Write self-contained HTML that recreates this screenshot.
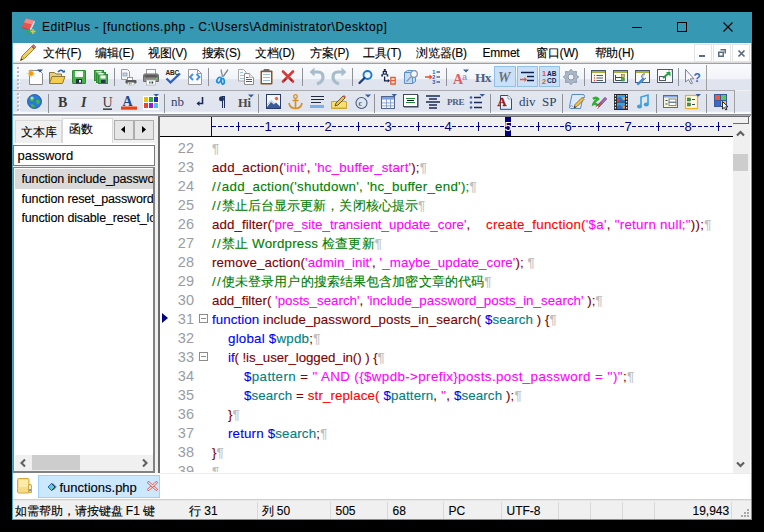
<!DOCTYPE html><html><head><meta charset="utf-8"><style>
*{margin:0;padding:0;box-sizing:border-box}
html,body{width:764px;height:532px;overflow:hidden;background:#000;font-family:"Liberation Sans",sans-serif;-webkit-text-stroke:0.12px}
.a{position:absolute;white-space:pre}
svg.a{overflow:visible}
.f12{font-size:12px;line-height:16px}
.f13{font-size:13.33px;line-height:19px}
.cj{font-size:13.33px}
.m{color:#ff00ff}.g{color:#008000}.b{color:#0000ff}.t{color:#008080}.r{color:#ff0000}.p{color:#c0c0c0}.k{color:#800000}
</style></head><body>
<div class="a" style="left:12px;top:12px;width:740px;height:508px;background:#45a6bf"></div>
<div class="a" style="left:13px;top:43px;width:738px;height:476px;background:#f0f0f0"></div>
<div class="a" style="left:12px;top:12px;width:740px;height:31px;background:#3798b3"></div>
<svg class="a" style="left:21px;top:18px" width="16" height="16" viewBox="0 0 16 16"><path d="M0.5 9.5L5 0.5L13 2.5L8.5 11.5Z" fill="#e8524a"/><path d="M5 0.5L13 2.5L11 6.5L3 4.5Z" fill="#f28a86"/><path d="M13 2.5L14 4L10 12.5L8.5 11.5Z" fill="#d4dcea"/><path d="M0.5 9.5L8.5 11.5L10 12.5L2 10.5Z" fill="#c03030"/><path d="M4.5 13.5H9.5M7 11V16" stroke="#2fb03a" stroke-width="1.5"/><path d="M9.5 13.5H14.5M12 11V16" stroke="#f0c41a" stroke-width="1.5"/></svg>
<div class="a " style="left:42px;top:19px;font-size:12px;line-height:16px;letter-spacing:0.575px;color:#000">EditPlus - [functions.php - C:\Users\Administrator\Desktop]</div>
<svg class="a" style="left:677px;top:22px" width="10" height="10" viewBox="0 0 10 10"><rect x="0.5" y="0.5" width="9" height="9" fill="none" stroke="#000" stroke-width="1"/></svg>
<div class="a" style="left:632px;top:27px;width:10px;height:1px;background:#000"></div>
<svg class="a" style="left:723px;top:22px" width="10" height="10" viewBox="0 0 10 10"><path d="M0.5 0.5L9.5 9.5M9.5 0.5L0.5 9.5" stroke="#000" stroke-width="1.1"/></svg>
<div class="a" style="left:13px;top:43px;width:738px;height:18px;background:#fff"></div>
<div class="a" style="left:13px;top:61px;width:738px;height:1px;background:#f0f0f0"></div>
<div class="a" style="left:13px;top:62px;width:738px;height:1px;background:#dadada"></div>
<div class="a" style="left:13px;top:63px;width:738px;height:1px;background:#a0a0a0"></div>
<svg class="a" style="left:19px;top:44px" width="18" height="18" viewBox="0 0 18 18"><path d="M1.5 16.5L3 12L13 2L15.5 4.5L5.5 14.5Z" fill="#f2cc5e" stroke="#8a6a2a" stroke-width="0.8"/><path d="M3 12L5.5 14.5" stroke="#c89a30" stroke-width="0.8"/><path d="M1.5 16.5L2.3 14.2L3.8 15.7Z" fill="#303030"/><path d="M13 2L14.5 0.5L17 3L15.5 4.5Z" fill="#e06a6a" stroke="#905050" stroke-width="0.6"/><path d="M12.5 2.5L15 5" stroke="#3a8a5a" stroke-width="1"/></svg>
<div class="a f12" style="left:43px;top:44.5px;color:#000;letter-spacing:-0.2px">文件(F)</div>
<div class="a f12" style="left:95px;top:44.5px;color:#000;letter-spacing:-0.2px">编辑(E)</div>
<div class="a f12" style="left:148px;top:44.5px;color:#000;letter-spacing:-0.2px">视图(V)</div>
<div class="a f12" style="left:201.5px;top:44.5px;color:#000;letter-spacing:-0.2px">搜索(S)</div>
<div class="a f12" style="left:255px;top:44.5px;color:#000;letter-spacing:-0.2px">文档(D)</div>
<div class="a f12" style="left:310px;top:44.5px;color:#000;letter-spacing:-0.2px">方案(P)</div>
<div class="a f12" style="left:363px;top:44.5px;color:#000;letter-spacing:-0.2px">工具(T)</div>
<div class="a f12" style="left:416px;top:44.5px;color:#000;letter-spacing:-0.2px">浏览器(B)</div>
<div class="a f12" style="left:482.5px;top:44.5px;color:#000;letter-spacing:-0.2px">Emmet</div>
<div class="a f12" style="left:536px;top:44.5px;color:#000;letter-spacing:-0.2px">窗口(W)</div>
<div class="a f12" style="left:594.5px;top:44.5px;color:#000;letter-spacing:-0.2px">帮助(H)</div>
<div class="a" style="left:694px;top:44px;width:18px;height:18px;border:1px solid #e3e3e3;background:#fff"></div>
<div class="a" style="left:713px;top:44px;width:18px;height:18px;border:1px solid #e3e3e3;background:#fff"></div>
<div class="a" style="left:732px;top:44px;width:18px;height:18px;border:1px solid #e3e3e3;background:#fff"></div>
<div class="a" style="left:699px;top:55px;width:6px;height:2px;background:#5b6b7b"></div>
<svg class="a" style="left:718px;top:49px" width="8" height="8" viewBox="0 0 8 8"><path d="M2.5 0.75H7.25V4.5M0.75 3.25H5.25V7.25H0.75Z" fill="none" stroke="#5b6b7b" stroke-width="1.5"/></svg>
<svg class="a" style="left:738px;top:50px" width="7" height="7" viewBox="0 0 7 7"><path d="M0.5 0.5L6.5 6.5M6.5 0.5L0.5 6.5" stroke="#5b6b7b" stroke-width="1.7"/></svg>
<div class="a" style="left:13px;top:64px;width:738px;height:26px;background:linear-gradient(#fafbfd 0px,#f1f4f8 15px,#dfe4ee 15.6px,#dfe4ee 26px)"></div>
<div class="a" style="left:13px;top:91px;width:738px;height:23px;background:linear-gradient(#e1e6ef 0px,#dfe4ee 20px,#eceff6 21px,#ffffff 22px)"></div>
<div class="a" style="left:706px;top:65px;width:1px;height:25px;background:#a0a0a0"></div>
<div class="a" style="left:13px;top:90px;width:722px;height:1px;background:#a9abb0"></div>
<div class="a" style="left:734px;top:90px;width:1px;height:23px;background:#a0a0a0"></div>
<div class="a" style="left:13px;top:114px;width:738px;height:1px;background:#8a8e98"></div>
<div class="a" style="left:13px;top:115px;width:738px;height:1px;background:#a6a6a6"></div>
<div class="a" style="left:494px;top:66px;width:21.5px;height:21px;background:#c9e0f7;border:1px solid #92c0ec"></div>
<div class="a" style="left:516.5px;top:66px;width:21.5px;height:21px;background:#c9e0f7;border:1px solid #92c0ec"></div>
<div class="a" style="left:538.5px;top:66px;width:21.5px;height:21px;background:#c9e0f7;border:1px solid #92c0ec"></div>
<svg class="a" style="left:27px;top:69px" width="16" height="16" viewBox="0 0 16 16"><path d="M2.5 1.5H12.5L15.5 4.5V15.5H2.5Z" fill="#fdfdfd" stroke="#8a8a8a"/><circle cx="4" cy="4.5" r="2.6" fill="#f6b21b"/><path d="M4 0V9M-0.5 4.5H8.5M1 1.5L7 7.5M7 1.5L1 7.5" stroke="#f9c46b" stroke-width="0.9" opacity="0.8"/><circle cx="4" cy="4.5" r="2" fill="#f39a0f"/><path d="M10 0.5H16L13 3.5Z" fill="#2d4f8e"/></svg>
<svg class="a" style="left:49px;top:69px" width="16" height="16" viewBox="0 0 16 16"><path d="M0.5 3.5H5.5L7 5H12.5V14.5H0.5Z" fill="#e9cf7c" stroke="#8c7a3e"/><path d="M3 7.5H16L13.5 14.5H0.5Z" fill="#f4cd4d" stroke="#8c7a3e"/><path d="M9 3Q12 -0.5 15 3" fill="none" stroke="#2f5f9f" stroke-width="1.4"/><path d="M13 3.5H16V1Z" fill="#2f5f9f"/></svg>
<svg class="a" style="left:72px;top:70px" width="16" height="16" viewBox="0 0 16 16"><rect x="0.5" y="0.5" width="13" height="13" rx="0.5" fill="#4ab04e" stroke="#2e8b36"/><rect x="3" y="1" width="8" height="6" fill="#f6fbf6"/><rect x="4" y="9" width="6" height="4.5" fill="#243040"/><rect x="7" y="10" width="2" height="2.5" fill="#e8e8f0"/></svg>
<svg class="a" style="left:94px;top:70px" width="16" height="16" viewBox="0 0 16 16"><rect x="0.5" y="0.5" width="9" height="10" fill="#4ab04e" stroke="#2e8b36"/><rect x="2.5" y="2.5" width="9" height="10" fill="#4ab04e" stroke="#2e8b36"/><rect x="4.5" y="4.5" width="9" height="9" fill="#4ab04e" stroke="#2e8b36"/><rect x="2.5" y="1" width="5" height="1.5" fill="#fff"/><rect x="4.5" y="3" width="5" height="1.5" fill="#fff"/><rect x="6.5" y="5.5" width="5" height="3" fill="#fff"/><rect x="7" y="10" width="4.5" height="3" fill="#2a3550"/></svg>
<svg class="a" style="left:121px;top:69px" width="16" height="16" viewBox="0 0 16 16"><path d="M0.5 0.5H6.5L8.5 2.5V10.5H0.5Z" fill="#f6f6f6" stroke="#9a9a9a"/><rect x="2" y="4" width="4" height="3" fill="#c4d4e8" stroke="#7a8aa0" stroke-width="0.6"/><rect x="6.5" y="8.5" width="5" height="3" fill="#fff" stroke="#999"/><rect x="4.5" y="11" width="11" height="3.5" rx="1" fill="#5a5a5a"/><rect x="7" y="13.5" width="6" height="2.5" fill="#fff" stroke="#aaa" stroke-width="0.5"/><rect x="8" y="14" width="1" height="1.5" fill="#3aa0e0"/><rect x="9.5" y="14" width="1" height="1.5" fill="#40b040"/></svg>
<svg class="a" style="left:143px;top:69px" width="16" height="16" viewBox="0 0 16 16"><rect x="3.5" y="0.5" width="9" height="5" fill="#fafafa" stroke="#9a9a9a"/><path d="M0.5 6.5Q0.5 5 2 5H14Q15.5 5 15.5 6.5V12.5H0.5Z" fill="#8c8c8c" stroke="#6a6a6a"/><rect x="1.5" y="6" width="13" height="2.5" fill="#5a5a5a"/><circle cx="13.5" cy="9.5" r="0.7" fill="#7ed07e"/><rect x="3.5" y="11" width="9" height="5" fill="#fff" stroke="#aaa" stroke-width="0.7"/><rect x="6" y="12.5" width="1.2" height="2" fill="#2a80d0"/><rect x="7.5" y="12.5" width="1.2" height="2" fill="#30a030"/><rect x="9" y="12.5" width="1.2" height="2" fill="#203060"/></svg>
<svg class="a" style="left:165px;top:69px" width="16" height="16" viewBox="0 0 16 16"><text x="0.5" y="5.8" font-family="Liberation Sans" font-size="6.5" font-weight="bold" fill="#222" letter-spacing="-0.2">ABC</text><path d="M1.5 9.5L5.5 13.5L15 4.5" fill="none" stroke="#2a5fc8" stroke-width="2.3"/></svg>
<svg class="a" style="left:187px;top:69px" width="16" height="16" viewBox="0 0 16 16"><path d="M1.5 0.5H10.5L14.5 4.5V15.5H1.5Z" fill="#fbfbfb" stroke="#9a9a9a"/><path d="M10.5 0.5V4.5H14.5" fill="none" stroke="#9a9a9a"/><path d="M6 5L3 8L6 11M9.5 5L12.5 8L9.5 11" fill="none" stroke="#3c8ee8" stroke-width="1.8"/></svg>
<svg class="a" style="left:214px;top:69px" width="16" height="16" viewBox="0 0 16 16"><path d="M7 0.5L8.5 8" stroke="#8a9098" stroke-width="1.4"/><path d="M14 0.5L9 8" stroke="#9aa0a8" stroke-width="1.4"/><path d="M13.5 1.5L9.5 7" stroke="#505860" stroke-width="0.5"/><ellipse cx="5" cy="11" rx="1.8" ry="3" fill="none" stroke="#1a8ee0" stroke-width="1.7" transform="rotate(30 5 11)"/><ellipse cx="8.8" cy="12.3" rx="1.5" ry="2.8" fill="none" stroke="#1a8ee0" stroke-width="1.7" transform="rotate(-5 8.8 12.3)"/></svg>
<svg class="a" style="left:238px;top:69px" width="16" height="16" viewBox="0 0 16 16"><path d="M0.5 0.5H5.5L8 3V12H0.5Z" fill="#fafafa" stroke="#a8a8a8"/><path d="M2 3.5H5M2 6.5H6.5M2 9.5H6" stroke="#8ab4e0" stroke-width="0.8"/><path d="M6.5 4.5H11.5L15.5 8.5V15.5H6.5Z" fill="#fdfdfd" stroke="#909090"/><path d="M11.5 4.5V8.5H15.5" fill="#e8e8e8" stroke="#909090" stroke-width="0.6"/><path d="M8 8.5H10.5M8 10.5H14M8 12.5H14" stroke="#2f64b8" stroke-width="1"/></svg>
<svg class="a" style="left:259px;top:69px" width="16" height="16" viewBox="0 0 16 16"><rect x="1.5" y="1.5" width="12" height="14" rx="1" fill="#8a5420"/><rect x="3" y="3.2" width="9" height="10.8" fill="#fbfcfe"/><rect x="4.5" y="0" width="6" height="2.8" rx="1" fill="#6a6a6a"/><path d="M4 5.5H11M4 8.5H11M4 11.5H11" stroke="#9cbce0" stroke-width="1"/></svg>
<svg class="a" style="left:281px;top:69px" width="16" height="16" viewBox="0 0 16 16"><path d="M2 2.5L12 12.5M12 2.5L2 12.5" stroke="#d63a3a" stroke-width="2.6" stroke-linecap="round"/><path d="M3 12L5 10M9 10L11 12" stroke="#8a2020" stroke-width="1.2"/></svg>
<svg class="a" style="left:309px;top:69px" width="16" height="16" viewBox="0 0 16 16"><path d="M4 3H9Q14 3 14 8Q14 13 8 15" fill="none" stroke="#a8bccc" stroke-width="3.2"/><path d="M0.5 3L5.5 -1.5V7.5Z" fill="#a8bccc"/></svg>
<svg class="a" style="left:331px;top:69px" width="16" height="16" viewBox="0 0 16 16"><path d="M12 3H7Q2 3 2 8Q2 13 8 15" fill="none" stroke="#a8bccc" stroke-width="3.2"/><path d="M15.5 3L10.5 -1.5V7.5Z" fill="#a8bccc"/></svg>
<svg class="a" style="left:358px;top:69px" width="16" height="16" viewBox="0 0 16 16"><circle cx="9.5" cy="6" r="4" fill="#eef6ff" stroke="#1f78d0" stroke-width="1.9"/><path d="M6.5 9L1.5 14" stroke="#1c3f78" stroke-width="2.3" stroke-linecap="round"/></svg>
<svg class="a" style="left:381px;top:69px" width="16" height="16" viewBox="0 0 16 16"><rect x="2.8" y="0" width="2" height="1.8" fill="#10204a"/><rect x="2.3" y="2.5" width="3" height="2.6" fill="none" stroke="#10204a" stroke-width="1.2"/><rect x="0.3" y="5.3" width="1.6" height="2.2" fill="#10204a"/><rect x="5.7" y="5.3" width="1.6" height="2.2" fill="#10204a"/><path d="M3.6 7.5V11.8H7" fill="none" stroke="#10204a" stroke-width="1.3"/><path d="M6.8 10L9 11.8L6.8 13.6Z" fill="#10204a"/><path d="M9.8 8.5H14.2V15H9.8Z M9.8 11.7H14.2" fill="none" stroke="#f05a2a" stroke-width="1.3"/></svg>
<svg class="a" style="left:403px;top:69px" width="16" height="16" viewBox="0 0 16 16"><path d="M1.5 3.5L4.5 1.5H12.5V12.5L9.5 14.5H1.5Z" fill="#c4dcf4" stroke="#5a90c8"/><path d="M1.5 3.5H9.5V14.5M9.5 3.5L12.5 1.5" fill="none" stroke="#5a90c8"/><circle cx="11" cy="5" r="3.3" fill="#f4f8fc" stroke="#8a9aaa" stroke-width="1.3"/><path d="M8.5 7.5L3.5 12.5" stroke="#8a9aaa" stroke-width="1.5"/></svg>
<svg class="a" style="left:425px;top:69px" width="16" height="16" viewBox="0 0 16 16"><path d="M0 8H5" stroke="#f04a20" stroke-width="1.5"/><path d="M4.5 5.5L7.5 8L4.5 10.5Z" fill="#f04a20"/><text x="7.2" y="5.2" font-family="Liberation Sans" font-size="5.5" font-weight="bold" fill="#1a5cc0">1</text><text x="7.2" y="10.2" font-family="Liberation Sans" font-size="5.5" font-weight="bold" fill="#1a5cc0">2</text><text x="7.2" y="15.2" font-family="Liberation Sans" font-size="5.5" font-weight="bold" fill="#1a5cc0">3</text><path d="M11.5 3H15M11.5 8H15M11.5 13H15" stroke="#10204a" stroke-width="1.2"/></svg>
<svg class="a" style="left:453px;top:69px" width="16" height="16" viewBox="0 0 16 16"><text x="0" y="15" font-family="Liberation Serif" font-size="14" font-weight="bold" fill="#dc6060">A</text><text x="9" y="11" font-family="Liberation Sans" font-size="9" font-weight="bold" fill="#a090d8">a</text><path d="M10 0.5H16L13 3.5Z" fill="#3a5aa0"/></svg>
<svg class="a" style="left:475px;top:69px" width="16" height="16" viewBox="0 0 16 16"><text x="0" y="13" font-family="Liberation Serif" font-size="13.5" font-weight="bold" fill="#4e5f80" letter-spacing="-0.8">Hx</text></svg>
<svg class="a" style="left:497px;top:69px" width="16" height="16" viewBox="0 0 16 16"><text x="1" y="13" font-family="Liberation Serif" font-size="14" font-style="italic" font-weight="bold" fill="#6b7080">W</text></svg>
<svg class="a" style="left:519px;top:69px" width="16" height="16" viewBox="0 0 16 16"><path d="M2 3.5H15M8 7.5H15M8 11.5H15" stroke="#102048" stroke-width="1.4"/><path d="M1 10.5H6" stroke="#f05020" stroke-width="1.5"/><path d="M5.5 8L8 10.5L5.5 13Z" fill="#f05020"/></svg>
<svg class="a" style="left:542px;top:69px" width="16" height="16" viewBox="0 0 16 16"><text x="0" y="7" font-family="Liberation Sans" font-size="7.5" font-weight="bold" fill="#f05020">1</text><text x="0" y="14.5" font-family="Liberation Sans" font-size="7.5" font-weight="bold" fill="#f05020">2</text><text x="5" y="6.8" font-family="Liberation Sans" font-size="6.5" font-weight="bold" fill="#10204a">AB</text><text x="5" y="14.3" font-family="Liberation Sans" font-size="6.5" font-weight="bold" fill="#10204a">CD</text></svg>
<svg class="a" style="left:563px;top:69px" width="16" height="16" viewBox="0 0 16 16"><polygon points="15.80,8.00 13.17,10.14 13.52,13.52 10.14,13.17 8.00,15.80 5.86,13.17 2.48,13.52 2.83,10.14 0.20,8.00 2.83,5.86 2.48,2.48 5.86,2.83 8.00,0.20 10.14,2.83 13.52,2.48 13.17,5.86" fill="#aab8c8" stroke="#8090a4" stroke-width="0.8" stroke-linejoin="round"/><circle cx="8" cy="8" r="3" fill="#eef2f6" stroke="#8a98aa"/></svg>
<svg class="a" style="left:591px;top:69px" width="16" height="16" viewBox="0 0 16 16"><rect x="0.5" y="1.5" width="14" height="12" fill="#fafaf4" stroke="#485870"/><rect x="1" y="2" width="13" height="2" fill="#a8b040"/><path d="M5.5 6.5H12M5.5 9H12M5.5 11.5H12" stroke="#505a6a" stroke-width="1"/><circle cx="3.5" cy="6.5" r="0.7" fill="#e84020"/><circle cx="3.5" cy="9" r="0.7" fill="#e84020"/><circle cx="3.5" cy="11.5" r="0.7" fill="#e84020"/></svg>
<svg class="a" style="left:613px;top:69px" width="16" height="16" viewBox="0 0 16 16"><rect x="0.5" y="1.5" width="14" height="12" fill="#fafaf4" stroke="#485870"/><rect x="1" y="2" width="13" height="2" fill="#a8b040"/><path d="M2.5 6V11.5H9M2.5 8.5H9" fill="none" stroke="#404a5a"/><rect x="8.5" y="5.5" width="3" height="3" fill="#f4c020" stroke="#505a6a" stroke-width="0.5"/><rect x="8.5" y="9" width="3" height="3" fill="#30c030" stroke="#505a6a" stroke-width="0.5"/></svg>
<svg class="a" style="left:635px;top:69px" width="16" height="16" viewBox="0 0 16 16"><rect x="0.5" y="1.5" width="14" height="12" fill="#fafaf4" stroke="#485870"/><rect x="1" y="2" width="13" height="2" fill="#a8b040"/><path d="M10 5A2.5 2.5 0 1 0 11 9L6 14" fill="#c8ccd4" stroke="#7a808a"/><path d="M8 10L3 15" stroke="#3a8ae0" stroke-width="2.4" stroke-linecap="round"/></svg>
<svg class="a" style="left:657px;top:69px" width="16" height="16" viewBox="0 0 16 16"><rect x="0.5" y="0.5" width="15" height="13" fill="#fafafa" stroke="#505a6a"/><path d="M11 2H11.5M12.5 2H13M14 2H14.5" stroke="#505a6a"/><rect x="2.5" y="7.5" width="6" height="4" fill="none" stroke="#505a6a"/><path d="M6 9L12 4" stroke="#20a040" stroke-width="2"/><path d="M9 3H13.5V7.5Z" fill="#20a040"/></svg>
<svg class="a" style="left:685px;top:69px" width="16" height="16" viewBox="0 0 16 16"><path d="M0.5 0.5V13L3.5 10.5L6 15L7.5 14.2L5.3 9.8H9Z" fill="#f4f6fa" stroke="#707884" stroke-width="0.9"/><text x="8.5" y="13" font-family="Liberation Sans" font-size="12" font-weight="bold" fill="#3070d0">?</text></svg>
<svg class="a" style="left:27px;top:94px" width="16" height="16" viewBox="0 0 16 16"><circle cx="7.5" cy="7.5" r="7" fill="#2a78d8" stroke="#1a4a98" stroke-width="0.8"/><path d="M3 4Q5 2 7 3Q8 5 6 7Q4 8 3 6Z M9 6Q12 5 13 8Q12 11 10 10Q9 8 9 6Z M4 10Q7 10 8 13Q6 14 4 12Z" fill="#40b848"/><circle cx="5" cy="4" r="1.5" fill="#cfe8ff" opacity="0.7"/></svg>
<svg class="a" style="left:58px;top:94px" width="16" height="16" viewBox="0 0 16 16"><text x="0" y="13" font-family="Liberation Serif" font-size="14" font-weight="bold" fill="#3a3a3a">B</text></svg>
<svg class="a" style="left:81px;top:94px" width="16" height="16" viewBox="0 0 16 16"><text x="0" y="13" font-family="Liberation Serif" font-size="14" font-weight="bold" font-style="italic" fill="#3a3a3a">I</text></svg>
<svg class="a" style="left:103px;top:94px" width="16" height="16" viewBox="0 0 16 16"><text x="-0.5" y="13" font-family="Liberation Serif" font-size="14" fill="#404040">U</text><rect x="0" y="14.5" width="9" height="1.3" fill="#202020"/></svg>
<svg class="a" style="left:121px;top:94px" width="16" height="16" viewBox="0 0 16 16"><text x="1.5" y="11.5" font-family="Liberation Serif" font-size="14" font-weight="bold" fill="#24468a">A</text><rect x="0" y="12.5" width="16" height="3.2" fill="#f04010"/></svg>
<svg class="a" style="left:143px;top:94px" width="16" height="16" viewBox="0 0 16 16"><rect x="0" y="2" width="16" height="14" fill="#fff"/><rect x="1" y="3" width="4" height="5" fill="#f7c400"/><rect x="6" y="3" width="4" height="5" fill="#34b034"/><rect x="11" y="3" width="4" height="5" fill="#2428d8"/><rect x="1" y="9" width="4" height="5" fill="#f04030"/><rect x="6" y="9" width="4" height="5" fill="#a018d8"/><rect x="11" y="9" width="4" height="5" fill="#40c8f0"/><path d="M10.5 0H16L13.2 2.8Z" fill="#3a5aa0"/></svg>
<svg class="a" style="left:171px;top:94px" width="16" height="16" viewBox="0 0 16 16"><text x="0" y="12" font-family="Liberation Serif" font-size="13" fill="#2a3f6a">nb</text></svg>
<svg class="a" style="left:196px;top:94px" width="16" height="16" viewBox="0 0 16 16"><path d="M6.5 3V9.5H1.5" fill="none" stroke="#1a2a5a" stroke-width="1.6"/><path d="M3.5 7L0.5 9.5L3.5 12Z" fill="#1a2a5a"/></svg>
<svg class="a" style="left:219px;top:94px" width="16" height="16" viewBox="0 0 16 16"><path d="M3 2H6V14H5V3H4V14H3Z" fill="#203060"/><circle cx="2.5" cy="4.8" r="2.5" fill="#203060"/></svg>
<svg class="a" style="left:238px;top:94px" width="16" height="16" viewBox="0 0 16 16"><text x="0" y="13" font-family="Liberation Serif" font-size="12.5" font-weight="bold" fill="#4a4a4a" letter-spacing="-0.3">Hi</text><path d="M10 0.5H16L13 3.5Z" fill="#3a5aa0"/></svg>
<svg class="a" style="left:266px;top:94px" width="16" height="16" viewBox="0 0 16 16"><rect x="0.5" y="0.5" width="14" height="14" fill="#f4f8fc" stroke="#2a3a6a"/><path d="M1 13L5 8L8 10.5L10 8.5L14 12.5V14H1Z" fill="#3a5a9a"/><path d="M1 11L5 6.5L9 10" fill="none" stroke="#8ab0e0" stroke-width="0.8"/><circle cx="10.5" cy="4.5" r="2" fill="#f06020" stroke="#fff" stroke-width="0.6"/></svg>
<svg class="a" style="left:288px;top:94px" width="16" height="16" viewBox="0 0 16 16"><circle cx="7.5" cy="2.5" r="1.8" fill="none" stroke="#d8902a" stroke-width="1.3"/><path d="M7.5 4V14.5M4.5 6.5H10.5" stroke="#d8902a" stroke-width="1.7"/><path d="M1 9Q2 14.5 7.5 14.5Q13 14.5 14 9" fill="none" stroke="#d8902a" stroke-width="1.7"/></svg>
<svg class="a" style="left:310px;top:94px" width="16" height="16" viewBox="0 0 16 16"><path d="M1 2.5H14M1 5.5H14M1 8.5H11" stroke="#202a3a" stroke-width="1.2"/><rect x="0" y="11" width="14" height="3" fill="#7ab0e8"/></svg>
<svg class="a" style="left:331px;top:94px" width="16" height="16" viewBox="0 0 16 16"><path d="M0.5 7.5H15.5V14.5H0.5Z" fill="#f8e070" stroke="#c8a830"/><path d="M1 13.5H15" stroke="#e8c84a"/><path d="M4 12L5 9L12 2L14 4L7 11Z" fill="#f0c040" stroke="#504020" stroke-width="0.8"/><path d="M12 2L13 1L15 3L14 4Z" fill="#e05050"/></svg>
<svg class="a" style="left:355px;top:94px" width="16" height="16" viewBox="0 0 16 16"><circle cx="6.5" cy="9" r="5.5" fill="none" stroke="#455a80" stroke-width="1.1"/><text x="3.6" y="12" font-family="Liberation Serif" font-size="8" font-weight="bold" fill="#455a80">c</text><path d="M10 0.5H16L13 3.5Z" fill="#3a5aa0"/></svg>
<svg class="a" style="left:381px;top:94px" width="16" height="16" viewBox="0 0 16 16"><rect x="0.5" y="2.5" width="13" height="12" fill="#f4f8ff" stroke="#50648a"/><rect x="1" y="3" width="12" height="2.5" fill="#7aa0e8"/><rect x="5" y="5" width="0.8" height="9.5" fill="#7a94c8"/><rect x="9" y="5" width="0.8" height="9.5" fill="#7a94c8"/><rect x="1" y="8.5" width="12.5" height="0.8" fill="#7a94c8"/><rect x="1" y="11.5" width="12.5" height="0.8" fill="#7a94c8"/><path d="M10.5 0H16L13.2 2.8Z" fill="#3a5aa0"/></svg>
<svg class="a" style="left:403px;top:94px" width="16" height="16" viewBox="0 0 16 16"><rect x="0.5" y="0.5" width="14" height="12" fill="#fff" stroke="#404a5a"/><path d="M1 13.5H15.5V1" fill="none" stroke="#8a94a8"/><path d="M3 4.5H12M4 6.5H11M3 8.5H12" stroke="#208a30" stroke-width="1"/><path d="M4 6.5H11" stroke="#101820"/></svg>
<svg class="a" style="left:425px;top:94px" width="16" height="16" viewBox="0 0 16 16"><path d="M1 2H15M4 5H12M1 8H15M4 11H12M4 14H12" stroke="#1a2a5a" stroke-width="1.5"/></svg>
<svg class="a" style="left:447px;top:94px" width="16" height="16" viewBox="0 0 16 16"><text x="0" y="11" font-family="Liberation Serif" font-size="9" font-weight="bold" fill="#4a5c80" letter-spacing="-0.3">PRE</text></svg>
<svg class="a" style="left:469px;top:94px" width="16" height="16" viewBox="0 0 16 16"><circle cx="2" cy="3.5" r="1.3" fill="#3a62b0"/><circle cx="2" cy="8.5" r="1.3" fill="#3a62b0"/><circle cx="2" cy="13.5" r="1.3" fill="#3a62b0"/><path d="M5 3.5H12M5 8.5H13M5 13.5H13" stroke="#1a2a5a" stroke-width="1.3"/><path d="M10.5 0H16L13.2 2.8Z" fill="#3a5aa0"/></svg>
<svg class="a" style="left:497px;top:94px" width="16" height="16" viewBox="0 0 16 16"><path d="M3.5 1.5H11L14.5 5V15.5H3.5Z" fill="#eef4fb" stroke="#3a4a6a" stroke-width="1"/><path d="M11 1.5V5H14.5" fill="#fff" stroke="#7a8aa8" stroke-width="0.8"/><path d="M4 14.5H14" stroke="#b8d4ee" stroke-width="1.5"/><text x="0.5" y="11.5" font-family="Liberation Serif" font-size="12.5" font-weight="bold" fill="#a01414" stroke="#a01414" stroke-width="0.3">A</text></svg>
<svg class="a" style="left:519px;top:94px" width="16" height="16" viewBox="0 0 16 16"><text x="0" y="12" font-family="Liberation Serif" font-size="13" fill="#2a3f6a">div</text></svg>
<svg class="a" style="left:542px;top:94px" width="16" height="16" viewBox="0 0 16 16"><text x="0" y="12" font-family="Liberation Serif" font-size="13" fill="#2a3f6a">SP</text></svg>
<svg class="a" style="left:569px;top:94px" width="16" height="16" viewBox="0 0 16 16"><path d="M3 0.5H14Q15.5 0.5 15.5 2.5V3.5H14L11.5 14.5H1.5Q0 14.5 0.5 12.5Z" fill="#dce9f8" stroke="#5a8ac8"/><path d="M1 12.5Q2.5 11 4 12.5" fill="none" stroke="#5a8ac8" stroke-width="0.8"/><path d="M5 14L6 10.5L13 3.5L15 5.5L8 12.5Z" fill="#f4c040" stroke="#705020" stroke-width="0.7"/><path d="M5 14L5.6 11.8L7 13.2Z" fill="#402010"/></svg>
<svg class="a" style="left:591px;top:94px" width="16" height="16" viewBox="0 0 16 16"><path d="M2 5Q5 2.5 7 5Q3 8 2.5 10Q5 9 7.5 12" fill="none" stroke="#30b030" stroke-width="2.6"/><path d="M5.5 14L15 4" stroke="#5a4a7a" stroke-width="3"/><path d="M6 13.5L15 4" stroke="#e04a4a" stroke-width="1.8"/><path d="M11 8.5L15 4" stroke="#8a70d8" stroke-width="1.8"/><path d="M5 14.5L7 12.5" stroke="#f0f0f0" stroke-width="1.8"/></svg>
<svg class="a" style="left:614px;top:94px" width="16" height="16" viewBox="0 0 16 16"><rect x="0" y="0" width="14" height="16" fill="#2a2a2a"/><rect x="3" y="1" width="8" height="6.5" fill="#3a9ee6"/><rect x="3" y="8.5" width="8" height="6.5" fill="#3a9ee6"/><path d="M3 4L6 3L8 5L11 4V7.5H3Z" fill="#2a70c8"/><rect x="8.5" y="3" width="2.5" height="3" fill="#f0a030"/><rect x="3" y="5" width="2" height="2.5" fill="#e84030"/><path d="M3 12L6 11L8 12.5L11 11.5V15H3Z" fill="#2a70c8"/><rect x="8.5" y="12" width="2.5" height="2.5" fill="#f08030"/><rect x="0.8" y="1" width="1.2" height="1.5" fill="#eee"/><rect x="12" y="1" width="1.2" height="1.5" fill="#eee"/><rect x="0.8" y="4" width="1.2" height="1.5" fill="#eee"/><rect x="12" y="4" width="1.2" height="1.5" fill="#eee"/><rect x="0.8" y="7" width="1.2" height="1.5" fill="#eee"/><rect x="12" y="7" width="1.2" height="1.5" fill="#eee"/><rect x="0.8" y="10" width="1.2" height="1.5" fill="#eee"/><rect x="12" y="10" width="1.2" height="1.5" fill="#eee"/><rect x="0.8" y="13" width="1.2" height="1.5" fill="#eee"/><rect x="12" y="13" width="1.2" height="1.5" fill="#eee"/></svg>
<svg class="a" style="left:637px;top:94px" width="16" height="16" viewBox="0 0 16 16"><path d="M4 12V3L11 1V10" fill="none" stroke="#3aa0e0" stroke-width="1.6"/><ellipse cx="2.5" cy="12.5" rx="2.5" ry="2" fill="#3aa0e0"/><ellipse cx="9.3" cy="10.5" rx="2.5" ry="2" fill="#3aa0e0"/></svg>
<svg class="a" style="left:663px;top:94px" width="16" height="16" viewBox="0 0 16 16"><rect x="0.5" y="1.5" width="14" height="12" fill="#f8f4d8" stroke="#5a6a8a"/><rect x="1" y="2" width="13" height="1.5" fill="#88a8e0"/><path d="M2.5 6.5H4.5M2.5 10H4.5" stroke="#404a5a"/><rect x="6" y="5" width="7" height="3" fill="#fff" stroke="#5a6a8a" stroke-width="0.8"/><rect x="6" y="8.5" width="7" height="3" fill="#fff" stroke="#5a6a8a" stroke-width="0.8"/></svg>
<svg class="a" style="left:685px;top:94px" width="16" height="16" viewBox="0 0 16 16"><rect x="0.5" y="1.5" width="12" height="13" fill="#fffbe0" stroke="#f0b020" stroke-width="1.2"/><rect x="2.5" y="4" width="3" height="3" fill="#30a040" stroke="#305040" stroke-width="0.5"/><rect x="2.5" y="9" width="3" height="3" fill="#30a040" stroke="#305040" stroke-width="0.5"/><path d="M7 5.5H10M7 10.5H10" stroke="#404a5a"/><path d="M10.5 0H16L13.2 2.8Z" fill="#3a5aa0"/></svg>
<svg class="a" style="left:714px;top:94px" width="16" height="16" viewBox="0 0 16 16"><rect x="0" y="0" width="13" height="13" fill="#3a5aa0"/><rect x="1" y="1" width="5" height="5" fill="#f05a3a"/><rect x="7" y="1" width="5" height="5" fill="#5ac85a"/><rect x="1" y="7" width="5" height="5" fill="#3a6ac8"/><rect x="7" y="7" width="5" height="5" fill="#f8c020"/><path d="M8.5 7.5V15L10.3 13.4L11.8 16L13 15.4L11.7 12.8H14Z" fill="#fff" stroke="#000" stroke-width="0.8"/></svg>
<div class="a" style="left:114px;top:68px;width:1px;height:18px;background:#8e9298"></div>
<div class="a" style="left:208px;top:68px;width:1px;height:18px;background:#8e9298"></div>
<div class="a" style="left:302px;top:68px;width:1px;height:18px;background:#8e9298"></div>
<div class="a" style="left:352px;top:68px;width:1px;height:18px;background:#8e9298"></div>
<div class="a" style="left:446px;top:68px;width:1px;height:18px;background:#8e9298"></div>
<div class="a" style="left:584px;top:68px;width:1px;height:18px;background:#8e9298"></div>
<div class="a" style="left:678px;top:68px;width:1px;height:18px;background:#8e9298"></div>
<div class="a" style="left:48px;top:94px;width:1px;height:19px;background:#8e9298"></div>
<div class="a" style="left:164px;top:94px;width:1px;height:19px;background:#8e9298"></div>
<div class="a" style="left:258px;top:94px;width:1px;height:19px;background:#8e9298"></div>
<div class="a" style="left:374px;top:94px;width:1px;height:19px;background:#8e9298"></div>
<div class="a" style="left:490px;top:94px;width:1px;height:19px;background:#8e9298"></div>
<div class="a" style="left:562px;top:94px;width:1px;height:19px;background:#8e9298"></div>
<div class="a" style="left:656px;top:94px;width:1px;height:19px;background:#8e9298"></div>
<div class="a" style="left:706px;top:94px;width:1px;height:19px;background:#8e9298"></div>
<div class="a" style="left:17px;top:67px;width:2px;height:2px;background:#b4bcc8;box-shadow:1px 1px 0 #fff"></div>
<div class="a" style="left:17px;top:71px;width:2px;height:2px;background:#b4bcc8;box-shadow:1px 1px 0 #fff"></div>
<div class="a" style="left:17px;top:75px;width:2px;height:2px;background:#b4bcc8;box-shadow:1px 1px 0 #fff"></div>
<div class="a" style="left:17px;top:79px;width:2px;height:2px;background:#b4bcc8;box-shadow:1px 1px 0 #fff"></div>
<div class="a" style="left:17px;top:83px;width:2px;height:2px;background:#b4bcc8;box-shadow:1px 1px 0 #fff"></div>
<div class="a" style="left:17px;top:87px;width:2px;height:2px;background:#b4bcc8;box-shadow:1px 1px 0 #fff"></div>
<div class="a" style="left:17px;top:93px;width:2px;height:2px;background:#b4bcc8;box-shadow:1px 1px 0 #fff"></div>
<div class="a" style="left:17px;top:97px;width:2px;height:2px;background:#b4bcc8;box-shadow:1px 1px 0 #fff"></div>
<div class="a" style="left:17px;top:101px;width:2px;height:2px;background:#b4bcc8;box-shadow:1px 1px 0 #fff"></div>
<div class="a" style="left:17px;top:105px;width:2px;height:2px;background:#b4bcc8;box-shadow:1px 1px 0 #fff"></div>
<div class="a" style="left:17px;top:109px;width:2px;height:2px;background:#b4bcc8;box-shadow:1px 1px 0 #fff"></div>
<div class="a" style="left:13px;top:116px;width:146px;height:357px;background:#f0f0f0"></div>
<div class="a" style="left:13px;top:116px;width:145px;height:1px;background:#f8f8f8"></div>
<div class="a" style="left:15px;top:120px;width:47px;height:23px;background:#f0f0f0;border:1px solid #d9d9d9;border-bottom:none"></div>
<div class="a " style="left:21px;top:123.5px;color:#000;font-size:12px;line-height:16px">文本库</div>
<div class="a" style="left:62px;top:118px;width:51px;height:27px;background:#fff;border:1px solid #d9d9d9;border-bottom:none"></div>
<div class="a " style="left:69px;top:121px;color:#000;font-size:12px;line-height:16px">函数</div>
<div class="a" style="left:14px;top:143px;width:142px;height:2px;background:#fff"></div>
<div class="a" style="left:114px;top:120px;width:20px;height:20px;background:#e6e6e6;border:1px solid #adadad"></div>
<div class="a" style="left:134px;top:120px;width:20px;height:20px;background:#e6e6e6;border:1px solid #adadad"></div>
<svg class="a" style="left:121px;top:126px" width="4" height="7" viewBox="0 0 4 7"><path d="M4 0V7L0 3.5Z" fill="#000"/></svg>
<svg class="a" style="left:142px;top:126px" width="4" height="7" viewBox="0 0 4 7"><path d="M0 0V7L4 3.5Z" fill="#000"/></svg>
<div class="a" style="left:13px;top:145px;width:142px;height:21px;background:#fff;border:1px solid #7a7a7a"></div>
<div class="a " style="left:17.5px;top:148px;color:#000;font-size:13px;line-height:16px">password</div>
<div class="a" style="left:13px;top:167px;width:142px;height:306px;background:#fff;border:1px solid #828282;border-right:2px solid #828282;border-bottom:2px solid #828282"></div>
<div class="a" style="left:15px;top:169px;width:138px;height:20px;background:#d9d9d9"></div>
<div class="a" style="left:21.5px;top:171.0px;width:131px;overflow:hidden;font-size:12.5px;line-height:16px;letter-spacing:-0.15px;color:#000">function include_password_posts_in_search</div>
<div class="a" style="left:21.5px;top:190.5px;width:131px;overflow:hidden;font-size:12.5px;line-height:16px;letter-spacing:-0.15px;color:#000">function reset_password_</div>
<div class="a" style="left:21.5px;top:210.0px;width:131px;overflow:hidden;font-size:12.5px;line-height:16px;letter-spacing:-0.15px;color:#000">function disable_reset_lost</div>
<div class="a" style="left:15px;top:455px;width:138px;height:16px;background:#f0f0f0"></div>
<div class="a" style="left:32px;top:455px;width:48px;height:15px;background:#cdcdcd"></div>
<svg class="a" style="left:20px;top:459px" width="6" height="9" viewBox="0 0 6 9"><path d="M5 0.5L1.5 4L5 7.5" fill="none" stroke="#606060" stroke-width="2.1"/></svg>
<svg class="a" style="left:142px;top:459px" width="6" height="9" viewBox="0 0 6 9"><path d="M1 0.5L4.5 4L1 7.5" fill="none" stroke="#606060" stroke-width="2.1"/></svg>
<div class="a" style="left:155px;top:116px;width:3px;height:357px;background:#f0f0f0"></div>
<div class="a" style="left:158px;top:116px;width:593px;height:357px;background:#fff"></div>
<div class="a" style="left:158px;top:116px;width:2px;height:357px;background:#6c6c6c"></div>
<div class="a" style="left:158px;top:116px;width:593px;height:1px;background:#6c6c6c"></div>
<div class="a" style="left:160px;top:117px;width:573px;height:19px;background:#f0f0f0"></div>
<div class="a" style="left:160px;top:136px;width:573px;height:1px;background:#000"></div>
<div class="a" style="left:160px;top:117px;width:573px;height:19px;overflow:hidden">
<svg class="a" style="left:-160px;top:-117px" width="764" height="140"><rect x="211" y="117" width="1" height="19" fill="#000080"/><rect x="212" y="126" width="4" height="1" fill="#000080"/><rect x="218" y="126" width="4" height="1" fill="#000080"/><rect x="224" y="126" width="4" height="1" fill="#000080"/><rect x="230" y="126" width="4" height="1" fill="#000080"/><rect x="236" y="126" width="4" height="1" fill="#000080"/><rect x="238" y="122" width="1" height="9" fill="#000080"/><rect x="242" y="126" width="4" height="1" fill="#000080"/><rect x="248" y="126" width="4" height="1" fill="#000080"/><rect x="254" y="126" width="4" height="1" fill="#000080"/><rect x="260" y="126" width="4" height="1" fill="#000080"/><rect x="272" y="126" width="4" height="1" fill="#000080"/><rect x="278" y="126" width="4" height="1" fill="#000080"/><rect x="284" y="126" width="4" height="1" fill="#000080"/><rect x="290" y="126" width="4" height="1" fill="#000080"/><rect x="296" y="126" width="4" height="1" fill="#000080"/><rect x="298" y="122" width="1" height="9" fill="#000080"/><rect x="302" y="126" width="4" height="1" fill="#000080"/><rect x="308" y="126" width="4" height="1" fill="#000080"/><rect x="314" y="126" width="4" height="1" fill="#000080"/><rect x="320" y="126" width="4" height="1" fill="#000080"/><rect x="332" y="126" width="4" height="1" fill="#000080"/><rect x="338" y="126" width="4" height="1" fill="#000080"/><rect x="344" y="126" width="4" height="1" fill="#000080"/><rect x="350" y="126" width="4" height="1" fill="#000080"/><rect x="356" y="126" width="4" height="1" fill="#000080"/><rect x="358" y="122" width="1" height="9" fill="#000080"/><rect x="362" y="126" width="4" height="1" fill="#000080"/><rect x="368" y="126" width="4" height="1" fill="#000080"/><rect x="374" y="126" width="4" height="1" fill="#000080"/><rect x="380" y="126" width="4" height="1" fill="#000080"/><rect x="392" y="126" width="4" height="1" fill="#000080"/><rect x="398" y="126" width="4" height="1" fill="#000080"/><rect x="404" y="126" width="4" height="1" fill="#000080"/><rect x="410" y="126" width="4" height="1" fill="#000080"/><rect x="416" y="126" width="4" height="1" fill="#000080"/><rect x="418" y="122" width="1" height="9" fill="#000080"/><rect x="422" y="126" width="4" height="1" fill="#000080"/><rect x="428" y="126" width="4" height="1" fill="#000080"/><rect x="434" y="126" width="4" height="1" fill="#000080"/><rect x="440" y="126" width="4" height="1" fill="#000080"/><rect x="452" y="126" width="4" height="1" fill="#000080"/><rect x="458" y="126" width="4" height="1" fill="#000080"/><rect x="464" y="126" width="4" height="1" fill="#000080"/><rect x="470" y="126" width="4" height="1" fill="#000080"/><rect x="476" y="126" width="4" height="1" fill="#000080"/><rect x="478" y="122" width="1" height="9" fill="#000080"/><rect x="482" y="126" width="4" height="1" fill="#000080"/><rect x="488" y="126" width="4" height="1" fill="#000080"/><rect x="494" y="126" width="4" height="1" fill="#000080"/><rect x="500" y="126" width="4" height="1" fill="#000080"/><rect x="512" y="126" width="4" height="1" fill="#000080"/><rect x="518" y="126" width="4" height="1" fill="#000080"/><rect x="524" y="126" width="4" height="1" fill="#000080"/><rect x="530" y="126" width="4" height="1" fill="#000080"/><rect x="536" y="126" width="4" height="1" fill="#000080"/><rect x="538" y="122" width="1" height="9" fill="#000080"/><rect x="542" y="126" width="4" height="1" fill="#000080"/><rect x="548" y="126" width="4" height="1" fill="#000080"/><rect x="554" y="126" width="4" height="1" fill="#000080"/><rect x="560" y="126" width="4" height="1" fill="#000080"/><rect x="572" y="126" width="4" height="1" fill="#000080"/><rect x="578" y="126" width="4" height="1" fill="#000080"/><rect x="584" y="126" width="4" height="1" fill="#000080"/><rect x="590" y="126" width="4" height="1" fill="#000080"/><rect x="596" y="126" width="4" height="1" fill="#000080"/><rect x="598" y="122" width="1" height="9" fill="#000080"/><rect x="602" y="126" width="4" height="1" fill="#000080"/><rect x="608" y="126" width="4" height="1" fill="#000080"/><rect x="614" y="126" width="4" height="1" fill="#000080"/><rect x="620" y="126" width="4" height="1" fill="#000080"/><rect x="632" y="126" width="4" height="1" fill="#000080"/><rect x="638" y="126" width="4" height="1" fill="#000080"/><rect x="644" y="126" width="4" height="1" fill="#000080"/><rect x="650" y="126" width="4" height="1" fill="#000080"/><rect x="656" y="126" width="4" height="1" fill="#000080"/><rect x="658" y="122" width="1" height="9" fill="#000080"/><rect x="662" y="126" width="4" height="1" fill="#000080"/><rect x="668" y="126" width="4" height="1" fill="#000080"/><rect x="674" y="126" width="4" height="1" fill="#000080"/><rect x="680" y="126" width="4" height="1" fill="#000080"/><rect x="692" y="126" width="4" height="1" fill="#000080"/><rect x="698" y="126" width="4" height="1" fill="#000080"/><rect x="704" y="126" width="4" height="1" fill="#000080"/><rect x="710" y="126" width="4" height="1" fill="#000080"/><rect x="716" y="126" width="4" height="1" fill="#000080"/><rect x="718" y="122" width="1" height="9" fill="#000080"/><rect x="722" y="126" width="4" height="1" fill="#000080"/><rect x="728" y="126" width="4" height="1" fill="#000080"/><rect x="505" y="117" width="6" height="19" fill="#000080"/></svg>
<div class="a" style="left:103px;top:0px;width:10px;text-align:center;font-size:13px;line-height:19px;color:#000080;-webkit-text-stroke:0">1</div>
<div class="a" style="left:163px;top:0px;width:10px;text-align:center;font-size:13px;line-height:19px;color:#000080;-webkit-text-stroke:0">2</div>
<div class="a" style="left:223px;top:0px;width:10px;text-align:center;font-size:13px;line-height:19px;color:#000080;-webkit-text-stroke:0">3</div>
<div class="a" style="left:283px;top:0px;width:10px;text-align:center;font-size:13px;line-height:19px;color:#000080;-webkit-text-stroke:0">4</div>
<div class="a" style="left:343px;top:0px;width:10px;text-align:center;font-size:13px;line-height:19px;color:#fff;-webkit-text-stroke:0">5</div>
<div class="a" style="left:403px;top:0px;width:10px;text-align:center;font-size:13px;line-height:19px;color:#000080;-webkit-text-stroke:0">6</div>
<div class="a" style="left:463px;top:0px;width:10px;text-align:center;font-size:13px;line-height:19px;color:#000080;-webkit-text-stroke:0">7</div>
<div class="a" style="left:523px;top:0px;width:10px;text-align:center;font-size:13px;line-height:19px;color:#000080;-webkit-text-stroke:0">8</div>
</div>
<div class="a" style="left:733px;top:117px;width:17px;height:356px;background:#f0f0f0"></div>
<div class="a" style="left:733px;top:117px;width:16px;height:7px;background:#f0f0f0;border:1px solid #6c6c6c;border-top:none;border-left:none"></div>
<div class="a" style="left:733px;top:154px;width:15px;height:17px;background:#cdcdcd"></div>
<svg class="a" style="left:736px;top:130px" width="10" height="7" viewBox="0 0 10 7"><path d="M1 5.5L4.5 2L8 5.5" fill="none" stroke="#606060" stroke-width="2.2"/></svg>
<svg class="a" style="left:736px;top:461px" width="10" height="7" viewBox="0 0 10 7"><path d="M1 1.5L4.5 5L8 1.5" fill="none" stroke="#606060" stroke-width="2.2"/></svg>
<div class="a" style="left:750px;top:116px;width:1px;height:357px;background:#fff"></div>
<div class="a" style="left:160px;top:137px;width:573px;height:335px;overflow:hidden">
<div class="a" style="left:0px;top:2px;width:34px;text-align:right;color:#9a9ca4;font-size:14.5px;line-height:19px;-webkit-text-stroke:0">22</div>
<div class="a f13" style="left:52px;top:2px;letter-spacing:0.3px;color:#800000"><span class="p">¶</span></div>
<div class="a" style="left:0px;top:21px;width:34px;text-align:right;color:#9a9ca4;font-size:14.5px;line-height:19px;-webkit-text-stroke:0">23</div>
<div class="a f13" style="left:52px;top:21px;letter-spacing:0.174px;color:#800000"><span class="k">add_action(</span><span class="m">'init'</span><span class="k">, </span><span class="m">'hc_buffer_start'</span><span class="k">);</span><span class="p">¶</span></div>
<div class="a" style="left:0px;top:40px;width:34px;text-align:right;color:#9a9ca4;font-size:14.5px;line-height:19px;-webkit-text-stroke:0">24</div>
<div class="a f13" style="left:52px;top:40px;letter-spacing:0.259px;color:#800000"><span class="g"><span style="letter-spacing:1.2px">//</span>add_action('shutdown', 'hc_buffer_end');</span><span class="p">¶</span></div>
<div class="a" style="left:0px;top:59px;width:34px;text-align:right;color:#9a9ca4;font-size:14.5px;line-height:19px;-webkit-text-stroke:0">25</div>
<div class="a f13" style="left:52px;top:59px;letter-spacing:0.074px;color:#800000"><span class="g"><span style="letter-spacing:1.2px">//</span><span class="cj">禁止后台显示更新，关闭核心提示</span></span><span class="p">¶</span></div>
<div class="a" style="left:0px;top:78px;width:34px;text-align:right;color:#9a9ca4;font-size:14.5px;line-height:19px;-webkit-text-stroke:0">26</div>
<div class="a f13" style="left:326px;top:78px;letter-spacing:0.263px;color:#800000"><span class="r">create_function(</span><span class="m">'$a'</span><span class="k">, </span><span class="m">"return null;"</span><span class="k">));</span><span class="p">¶</span></div>
<div class="a" style="left:0px;top:97px;width:34px;text-align:right;color:#9a9ca4;font-size:14.5px;line-height:19px;-webkit-text-stroke:0">27</div>
<div class="a f13" style="left:52px;top:97px;letter-spacing:0.202px;color:#800000"><span class="g"><span style="letter-spacing:1.2px">//</span><span class="cj">禁止</span> Wordpress <span class="cj">检查更新</span></span><span class="p">¶</span></div>
<div class="a" style="left:0px;top:116px;width:34px;text-align:right;color:#9a9ca4;font-size:14.5px;line-height:19px;-webkit-text-stroke:0">28</div>
<div class="a f13" style="left:52px;top:116px;letter-spacing:0.088px;color:#800000"><span class="k">remove_action(</span><span class="m">'admin_init'</span><span class="k">, </span><span class="m">'_maybe_update_core'</span><span class="k">); </span><span class="p">¶</span></div>
<div class="a" style="left:0px;top:135px;width:34px;text-align:right;color:#9a9ca4;font-size:14.5px;line-height:19px;-webkit-text-stroke:0">29</div>
<div class="a f13" style="left:52px;top:135px;letter-spacing:0.118px;color:#800000"><span class="g"><span style="letter-spacing:1.2px">//</span><span class="cj">使未登录用户的搜索结果包含加密文章的代码</span></span><span class="p">¶</span></div>
<div class="a" style="left:0px;top:154px;width:34px;text-align:right;color:#9a9ca4;font-size:14.5px;line-height:19px;-webkit-text-stroke:0">30</div>
<div class="a f13" style="left:52px;top:154px;letter-spacing:0.009px;color:#800000"><span class="k">add_filter( </span><span class="m">'posts_search'</span><span class="k">, </span><span class="m">'include_password_posts_in_search'</span><span class="k"> );</span><span class="p">¶</span></div>
<div class="a" style="left:0px;top:173px;width:34px;text-align:right;color:#9a9ca4;font-size:14.5px;line-height:19px;-webkit-text-stroke:0">31</div>
<svg class="a" style="left:39px;top:177px" width="9" height="9"><rect x="0.5" y="0.5" width="8" height="8" fill="#fff" stroke="#8c8c8c"/><rect x="2" y="4" width="5" height="1" fill="#8c8c8c"/></svg>
<div class="a f13" style="left:52px;top:173px;letter-spacing:0.077px;color:#800000"><span class="b">function</span><span class="k"> include_password_posts_in_search( </span><span class="b">$</span><span class="t">search</span><span class="k"> ) {</span><span class="p">¶</span></div>
<div class="a" style="left:0px;top:192px;width:34px;text-align:right;color:#9a9ca4;font-size:14.5px;line-height:19px;-webkit-text-stroke:0">32</div>
<div class="a f13" style="left:68px;top:192px;letter-spacing:0.223px;color:#800000"><span class="b">global</span><span class="k"> </span><span class="b">$</span><span class="t">wpdb</span><span class="k">;</span><span class="p">¶</span></div>
<div class="a" style="left:0px;top:211px;width:34px;text-align:right;color:#9a9ca4;font-size:14.5px;line-height:19px;-webkit-text-stroke:0">33</div>
<svg class="a" style="left:39px;top:215px" width="9" height="9"><rect x="0.5" y="0.5" width="8" height="8" fill="#fff" stroke="#8c8c8c"/><rect x="2" y="4" width="5" height="1" fill="#8c8c8c"/></svg>
<div class="a f13" style="left:68px;top:211px;letter-spacing:-0.085px;color:#800000"><span class="b">if</span><span class="k">( !is_user_logged_in() ) {</span><span class="p">¶</span></div>
<div class="a" style="left:0px;top:230px;width:34px;text-align:right;color:#9a9ca4;font-size:14.5px;line-height:19px;-webkit-text-stroke:0">34</div>
<div class="a f13" style="left:84px;top:230px;letter-spacing:0.394px;color:#800000"><span class="b">$</span><span class="t">pattern</span><span class="k"> = </span><span class="m">" AND ({$wpdb-&gt;prefix}posts.post_password = '')"</span><span class="k">;</span><span class="p">¶</span></div>
<div class="a" style="left:0px;top:249px;width:34px;text-align:right;color:#9a9ca4;font-size:14.5px;line-height:19px;-webkit-text-stroke:0">35</div>
<div class="a f13" style="left:84px;top:249px;letter-spacing:0.118px;color:#800000"><span class="b">$</span><span class="t">search</span><span class="k"> = </span><span class="r">str_replace(</span><span class="k"> </span><span class="b">$</span><span class="t">pattern</span><span class="k">, </span><span class="m">''</span><span class="k">, </span><span class="b">$</span><span class="t">search</span><span class="k"> );</span><span class="p">¶</span></div>
<div class="a" style="left:0px;top:268px;width:34px;text-align:right;color:#9a9ca4;font-size:14.5px;line-height:19px;-webkit-text-stroke:0">36</div>
<div class="a f13" style="left:68px;top:268px;letter-spacing:0.0px;color:#800000"><span class="k">}</span><span class="p">¶</span></div>
<div class="a" style="left:0px;top:287px;width:34px;text-align:right;color:#9a9ca4;font-size:14.5px;line-height:19px;-webkit-text-stroke:0">37</div>
<div class="a f13" style="left:68px;top:287px;letter-spacing:0.164px;color:#800000"><span class="b">return</span><span class="k"> </span><span class="b">$</span><span class="t">search</span><span class="k">;</span><span class="p">¶</span></div>
<div class="a" style="left:0px;top:306px;width:34px;text-align:right;color:#9a9ca4;font-size:14.5px;line-height:19px;-webkit-text-stroke:0">38</div>
<div class="a f13" style="left:52px;top:306px;letter-spacing:0.0px;color:#800000"><span class="k">}</span><span class="p">¶</span></div>
<div class="a" style="left:0px;top:325px;width:34px;text-align:right;color:#9a9ca4;font-size:14.5px;line-height:19px;-webkit-text-stroke:0">39</div>
<div class="a f13" style="left:52px;top:325px;letter-spacing:0.3px;color:#800000"><span class="p">¶</span></div>
<div class="a f13" style="left:52px;top:78px;letter-spacing:0.062px;color:#800000"><span class="k">add_filter(</span><span class="m">'pre_site_transient_update_core'</span><span class="k">,</span></div>
<svg class="a" style="left:1.5px;top:175.5px" width="6" height="10"><path d="M0 0L6 5L0 10Z" fill="#000080"/></svg>
</div>
<div class="a" style="left:13px;top:473px;width:738px;height:26px;background:#ffffff"></div>
<div class="a" style="left:159px;top:473px;width:592px;height:1px;background:#ececec"></div>
<svg class="a" style="left:17px;top:478px" width="15" height="16" viewBox="0 0 15 16"><rect x="0.5" y="0.5" width="11.5" height="14.5" rx="1" fill="#f6dc86" stroke="#d8a840"/><rect x="2" y="2" width="9" height="7" fill="#fbeaa8"/><path d="M11.5 6.5H13.5Q14.5 6.5 14.5 7.5V14.5H11.5Z" fill="#f2d27a" stroke="#d8a840"/><rect x="12.3" y="8" width="1.4" height="5" fill="#ffffff"/><rect x="12.3" y="11" width="1.4" height="2" fill="#3a78c8"/></svg>
<div class="a" style="left:38px;top:475px;width:122px;height:23px;background:#cce8ff;border:1px solid #99d1ff"></div>
<svg class="a" style="left:48px;top:483px" width="10" height="8" viewBox="0 0 10 8"><path d="M3.5 0.5L7 4L3.5 7.5L0 4Z" fill="#5ad0c8" stroke="#2a50c0" stroke-width="0.9"/><path d="M4 0.5L7.5 4L4 7.5" fill="none" stroke="#101010" stroke-width="1"/><path d="M5.5 0.5L9 4L5.5 7.5" fill="none" stroke="#909090" stroke-width="0.8" stroke-dasharray="1 1"/></svg>
<div class="a " style="left:59.5px;top:480px;color:#000;font-size:13px;line-height:16px">functions.php</div>
<svg class="a" style="left:147px;top:481px" width="11" height="10" viewBox="0 0 11 10"><path d="M1.5 1.5L9.5 8.5M9.5 1.5L1.5 8.5" stroke="#d05a5a" stroke-width="2.6" stroke-linecap="round"/><path d="M1.5 1.5L9.5 8.5M9.5 1.5L1.5 8.5" stroke="#fbe0e0" stroke-width="1.1" stroke-linecap="round"/></svg>
<div class="a" style="left:13px;top:499px;width:738px;height:1px;background:#d0d0d0"></div>
<div class="a" style="left:13px;top:500px;width:738px;height:19px;background:#f0f0f0"></div>
<div class="a" style="left:13px;top:500px;width:738px;height:1px;background:#e6e6e6"></div>
<div class="a " style="left:14.5px;top:503px;color:#000;font-size:12px;line-height:16px">如需帮助，请按键盘 F1 键</div>
<div class="a " style="left:189px;top:503px;color:#000;font-size:12px;line-height:16px">行 31</div>
<div class="a " style="left:261.5px;top:503px;color:#000;font-size:12px;line-height:16px">列 50</div>
<div class="a " style="left:335.5px;top:503px;color:#000;font-size:12px;line-height:16px">505</div>
<div class="a " style="left:392.5px;top:503px;color:#000;font-size:12px;line-height:16px">68</div>
<div class="a " style="left:448.5px;top:503px;color:#000;font-size:12px;line-height:16px">PC</div>
<div class="a " style="left:506.5px;top:503px;color:#000;font-size:12px;line-height:16px">UTF-8</div>
<div class="a " style="left:692.5px;top:503px;color:#000;font-size:12px;line-height:16px">19,943</div>
<div class="a" style="left:257px;top:502px;width:1px;height:17px;background:#d9d9d9"></div>
<div class="a" style="left:330px;top:502px;width:1px;height:17px;background:#d9d9d9"></div>
<div class="a" style="left:387px;top:502px;width:1px;height:17px;background:#d9d9d9"></div>
<div class="a" style="left:443px;top:502px;width:1px;height:17px;background:#d9d9d9"></div>
<div class="a" style="left:501px;top:502px;width:1px;height:17px;background:#d9d9d9"></div>
<div class="a" style="left:558px;top:502px;width:1px;height:17px;background:#d9d9d9"></div>
<div class="a" style="left:590px;top:502px;width:1px;height:17px;background:#d9d9d9"></div>
<div class="a" style="left:622px;top:502px;width:1px;height:17px;background:#d9d9d9"></div>
<div class="a" style="left:654px;top:502px;width:1px;height:17px;background:#d9d9d9"></div>
<div class="a" style="left:731px;top:502px;width:1px;height:17px;background:#d9d9d9"></div>
<svg class="a" style="left:740px;top:508px" width="10" height="10" viewBox="0 0 10 10"><rect x="7" y="1" width="2" height="2" fill="#a8a8a8"/><rect x="4" y="4" width="2" height="2" fill="#a8a8a8"/><rect x="7" y="4" width="2" height="2" fill="#a8a8a8"/><rect x="1" y="7" width="2" height="2" fill="#a8a8a8"/><rect x="4" y="7" width="2" height="2" fill="#a8a8a8"/><rect x="7" y="7" width="2" height="2" fill="#a8a8a8"/></svg>
</body></html>
